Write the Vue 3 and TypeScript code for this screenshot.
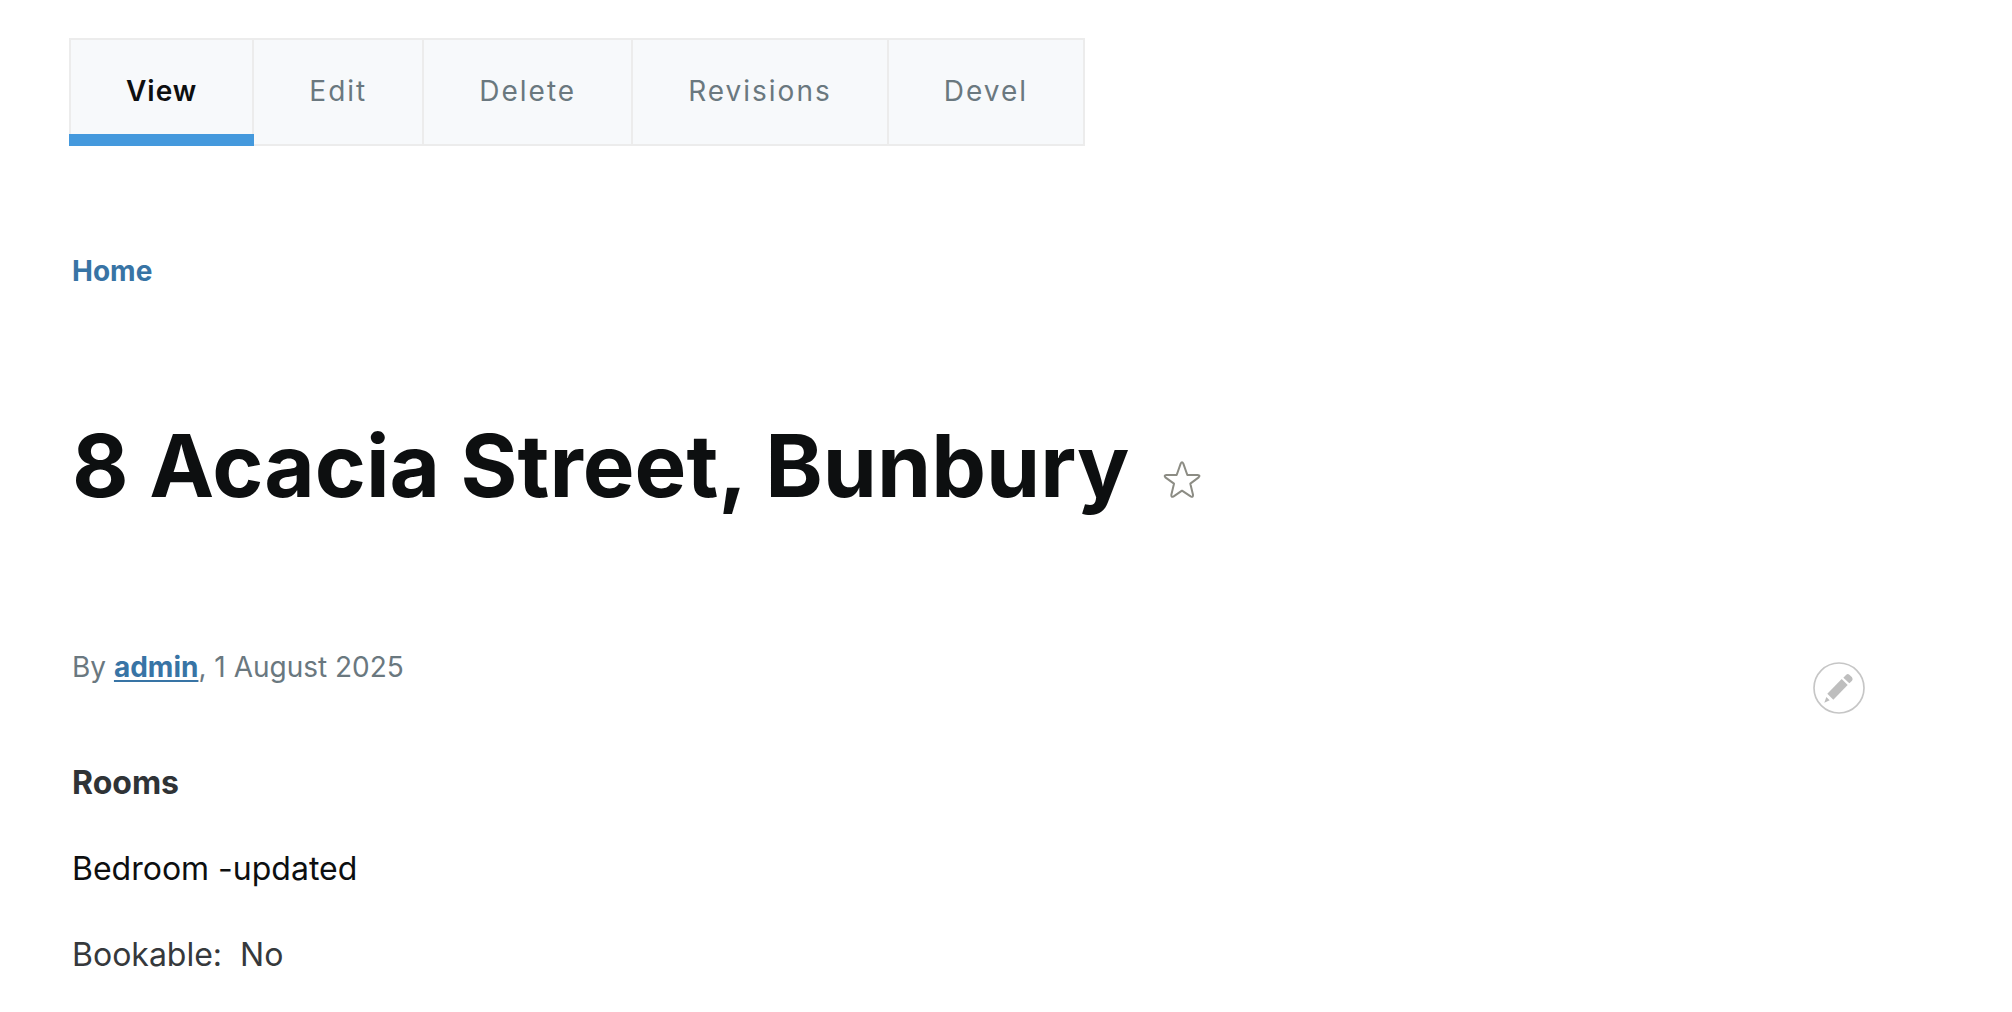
<script setup lang="ts">
import { ref } from 'vue'

interface Tab {
  label: string
  href: string
}

const tabs: Tab[] = [
  { label: 'View', href: '#view' },
  { label: 'Edit', href: '#edit' },
  { label: 'Delete', href: '#delete' },
  { label: 'Revisions', href: '#revisions' },
  { label: 'Devel', href: '#devel' },
]

const active = ref('View')
</script>

<template>
  <div class="page">
    <nav class="tabs" aria-label="Primary tabs">
      <a
        v-for="tab in tabs"
        :key="tab.label"
        class="tab"
        :class="{ active: tab.label === active }"
        :href="tab.href"
        @click="active = tab.label"
      >{{ tab.label }}</a>
    </nav>

    <main class="content">
      <nav class="breadcrumb" aria-label="Breadcrumb">
        <a href="#home">Home</a>
      </nav>

      <header class="heading">
        <h1>8 Acacia Street, Bunbury</h1>
        <button class="star" type="button" aria-label="Add to shortcuts">
          <svg width="38" height="40" viewBox="42 30 114 120" fill="none" stroke="#8c8c84" stroke-width="6" stroke-linejoin="round">
            <path d="M95 41Q99 33 103 41L115 75L146 75Q155 76 149 82L124 101L132 134Q133 143 125 139L99 122L74 139Q66 143 67 134L75 101L49 82Q44 76 52 75L83 75Z" />
          </svg>
        </button>
      </header>

      <article class="node">
        <button class="edit" type="button" aria-label="Open configuration options">
          <svg width="52" height="52" viewBox="39 36 156 156">
            <circle cx="117" cy="114" r="75" fill="#fff" stroke="#c6c6c6" stroke-width="5" />
            <g fill="#bebebe">
              <path d="M125 87L143 105L100 149L82 131Z" />
              <path d="M130 83L138 75Q143 70 148 74L156 82Q160 87 156 92L148 100Z" />
              <path d="M79 141L89 151L73 158Z" />
            </g>
          </svg>
        </button>
        <p class="byline">By <a href="#admin">admin</a>, 1 August 2025</p>
        <h2>Rooms</h2>
        <p class="room">Bedroom -updated</p>
        <dl class="field">
          <dt>Bookable:</dt>
          <dd>No</dd>
        </dl>
      </article>
    </main>
  </div>
</template>

<style>
body {
  margin: 0;
  background: #fff;
}
</style>

<style scoped>
.page {
  padding: 38px 147px 24px 69px;
  font-family: Inter, "Open Sans", sans-serif;
  font-size: 28px;
  line-height: 36px;
  color: #0d0f10;
}

.tabs {
  display: flex;
}

.tab {
  position: relative;
  box-sizing: border-box;
  height: 108px;
  padding: 33px 55px;
  border: 2px solid #ececec;
  border-left-width: 0;
  background: #f7f9fb;
  color: #6a787f;
  letter-spacing: 2px;
  text-decoration: none;
}

.tab:first-child {
  border-left-width: 2px;
}

.tab.active {
  color: #0d0f10;
  font-weight: 600;
  letter-spacing: 1px;
}

/* The marker lies over the tab's own borders. */
.tab.active::after {
  content: "";
  position: absolute;
  right: -2px;
  bottom: -2px;
  left: -2px;
  height: 12px;
  background: #4499dd;
}

.content {
  padding-left: 3px;
}

.breadcrumb {
  margin-top: 107px;
  font-weight: 700;
}

.breadcrumb a {
  color: #3874a5;
  text-decoration: none;
}

.heading {
  display: flex;
  align-items: center;
  gap: 34px;
  margin-top: 129px;
}

h1 {
  margin: 0;
  font-size: 87px;
  line-height: 96px;
  font-weight: 700;
}

button {
  padding: 0;
  border: 0;
  background: none;
  cursor: pointer;
}

svg {
  display: block;
}

.star {
  margin-top: 28px;
}

.node {
  position: relative;
  margin-top: 135px;
}

.edit {
  position: absolute;
  top: 13px;
  right: 0;
}

.byline {
  margin: 0;
  color: #6a787f;
}

.byline a {
  color: #3874a5;
  font-weight: 700;
  text-underline-offset: 3px;
  text-decoration-thickness: 2px;
}

h2,
.room,
.field {
  margin: 46px 0 0;
  font-size: 32px;
  line-height: 40px;
}

h2 {
  margin-top: 78px;
  font-weight: 700;
  color: #2f3336;
}

.field {
  display: flex;
  gap: 18px;
  color: #36393c;
}

dd {
  margin: 0;
}
</style>
